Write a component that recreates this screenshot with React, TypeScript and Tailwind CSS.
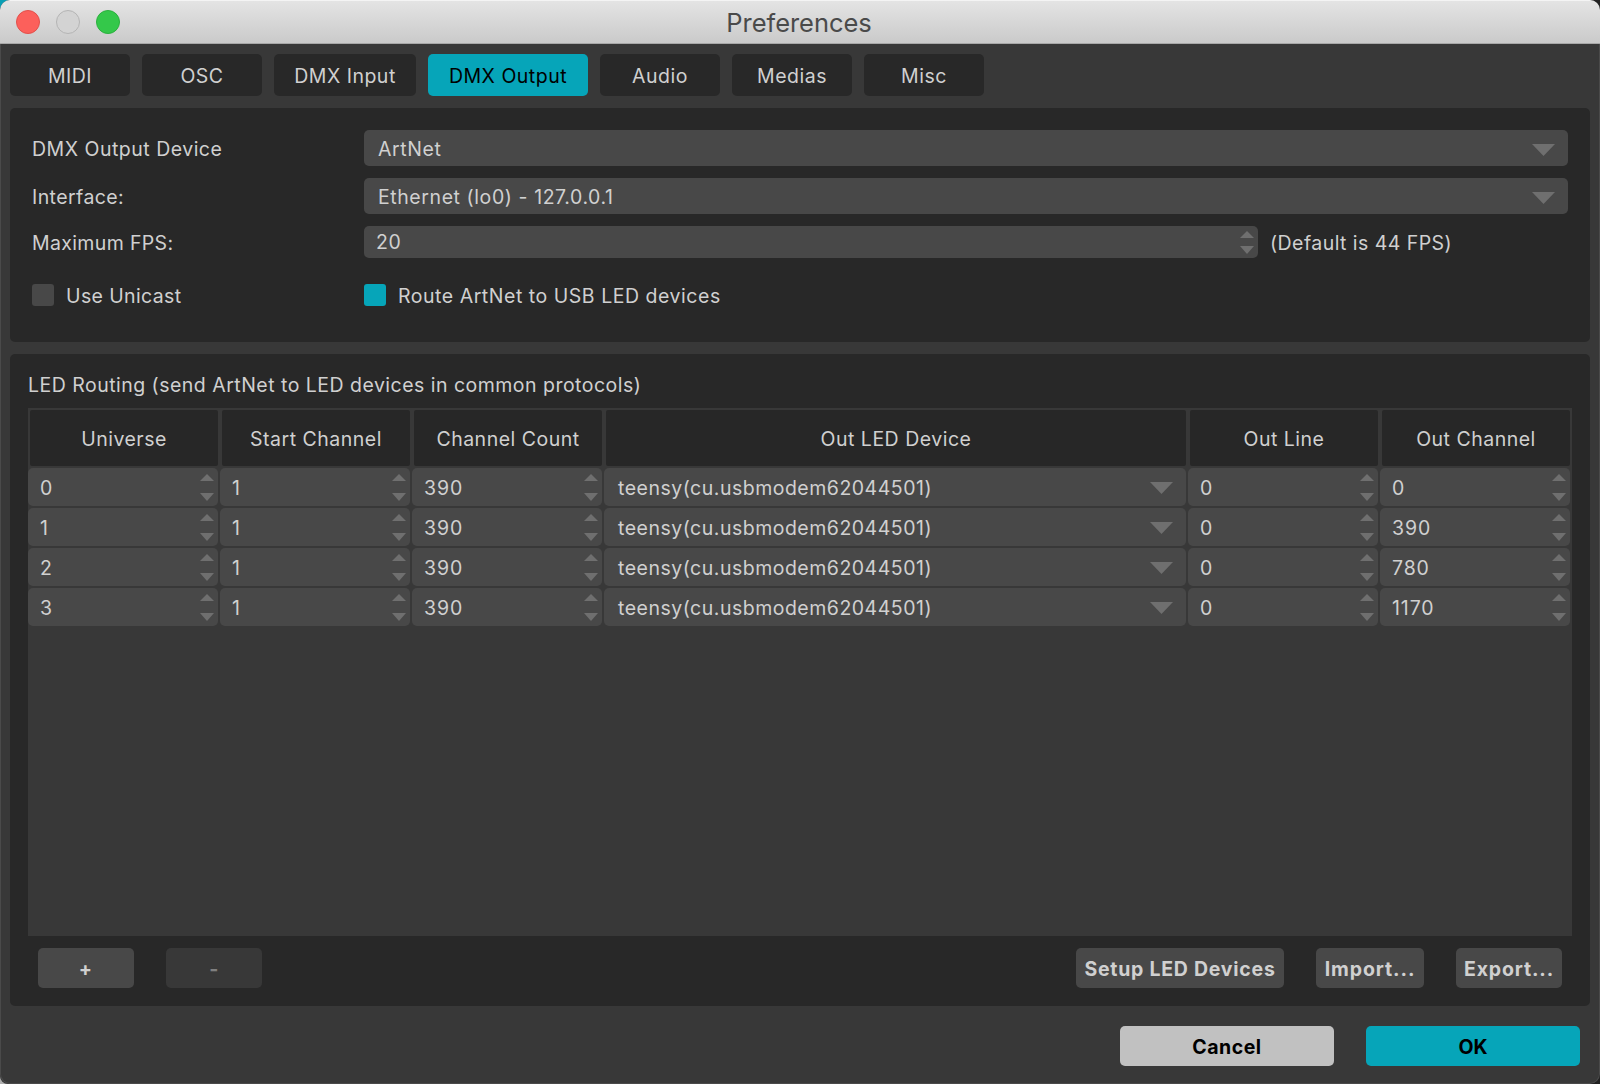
import React from 'react';
import clsx from 'clsx';

const tabs = [
  { label: 'MIDI', width: 'w-[120px]' },
  { label: 'OSC', width: 'w-[120px]' },
  { label: 'DMX Input', width: 'w-[142px]' },
  { label: 'DMX Output', width: 'w-[160px]' },
  { label: 'Audio', width: 'w-[120px]' },
  { label: 'Medias', width: 'w-[120px]' },
  { label: 'Misc', width: 'w-[120px]' },
];

const columns = ['Universe', 'Start Channel', 'Channel Count', 'Out LED Device', 'Out Line', 'Out Channel'];

const routes = [
  { universe: 0, start: 1, count: 390, device: 'teensy(cu.usbmodem62044501)', line: 0, channel: 0 },
  { universe: 1, start: 1, count: 390, device: 'teensy(cu.usbmodem62044501)', line: 0, channel: 390 },
  { universe: 2, start: 1, count: 390, device: 'teensy(cu.usbmodem62044501)', line: 0, channel: 780 },
  { universe: 3, start: 1, count: 390, device: 'teensy(cu.usbmodem62044501)', line: 0, channel: 1170 },
];

const gridCols = 'grid grid-cols-[192px_192px_192px_584px_192px_192px]';

const ComboArrow: React.FC = () => (
  <svg className="w-[23px] h-3 shrink-0" viewBox="0 0 23 12" fill="#6f6f6f">
    <path d="M0 0h23L11.5 12z" />
  </svg>
);

const SpinArrows: React.FC<{ tall?: boolean }> = ({ tall }) => (
  <div className={clsx('flex flex-col shrink-0', tall ? 'gap-3' : 'gap-2')}>
    <svg className="w-3.5 h-[7px]" viewBox="0 0 14 7" fill="#6f6f6f">
      <path d="M7 0l7 7H0z" />
    </svg>
    <svg className="w-3.5 h-2" viewBox="0 0 14 8" fill="#6f6f6f">
      <path d="M0 0h14L7 8z" />
    </svg>
  </div>
);

const Combo: React.FC<{ value: string }> = ({ value }) => (
  <div className="h-9 w-[1204px] rounded-[5px] bg-[#484848] flex items-center justify-between pl-3.5 pr-[13px]">
    <span className="pt-0.5 tracking-[0.58px]">{value}</span>
    <div className="pt-1">
      <ComboArrow />
    </div>
  </div>
);

const SpinCell: React.FC<{ value: number }> = ({ value }) => (
  <div className="h-[38px] mr-0.5 rounded-[5px] bg-[#484848] flex items-center justify-between pl-3 pr-1">
    <span className="pt-0.5 tracking-[0.9px]">{value}</span>
    <SpinArrows tall />
  </div>
);

const Checkbox: React.FC<{ label: string; checked?: boolean }> = ({ label, checked }) => (
  <label className="flex items-center gap-3">
    <span className={clsx('size-[22px] rounded-[3px]', checked ? 'bg-[#06a5b9]' : 'bg-[#484848]')}></span>
    <span className={clsx('pt-0.5', checked ? 'tracking-[0.53px]' : 'tracking-[0.38px]')}>{label}</span>
  </label>
);

const buttonBase = 'h-10 rounded-[5px] flex items-center justify-center pt-0.5 font-bold';

const App: React.FC = () => {
  return (
    <div className="relative w-[1600px] h-[1084px] overflow-hidden bg-[#222222] font-['Inter',sans-serif] text-[19.5px] leading-6 tracking-[0.5px] whitespace-nowrap text-[#d0d0d0]">
      {/* Desktop showing behind the window corners */}
      <div className="absolute left-0 top-0 size-4 bg-[#0a9fb5]"></div>
      <div className="absolute left-0 bottom-0 size-4 bg-[#b0b0b0]"></div>

      <div className="relative w-full h-full rounded-[10px] rounded-bl-[8px] overflow-hidden bg-[#383838]">
        {/* Title bar */}
        <div className="relative h-11 flex items-center justify-center bg-linear-to-b from-[#e4e4e4] to-[#cacaca] border-t border-t-[#f4f4f4] border-b border-b-[#a8a8a8]">
          <div className="absolute left-4 top-[9px] flex gap-4">
            <span className="size-6 rounded-full bg-[#fc605b] border border-[#e2504b]"></span>
            <span className="size-6 rounded-full bg-[#d3d3d3] border border-[#b4b4b4]"></span>
            <span className="size-6 rounded-full bg-[#34c84a] border border-[#2bb03e]"></span>
          </div>
          <h1 className="text-[25.5px] leading-8 tracking-[-0.05px] pt-0.5 pr-0.5 text-[#4a4a4a]">Preferences</h1>
        </div>

        <div className="h-[1040px] px-[9px] pt-[10px] border-x border-b border-[#4a4a4a] rounded-b-[10px]">
          {/* Tabs */}
          <div className="flex gap-3">
            {tabs.map((tab) => (
              <button
                key={tab.label}
                className={clsx(
                  'h-[42px] rounded-[5px] pt-0.5',
                  tab.width,
                  tab.label === 'DMX Output' ? 'bg-[#06a5b9] text-black' : 'bg-[#282828]'
                )}
              >
                {tab.label}
              </button>
            ))}
          </div>

          {/* Device settings */}
          <div className="mt-3 h-[234px] rounded-[5px] bg-[#282828] pt-[22px] px-[22px]">
            <div className="flex h-9 items-center">
              <span className="w-[332px] pt-0.5">DMX Output Device</span>
              <Combo value="ArtNet" />
            </div>
            <div className="mt-3 flex h-9 items-center">
              <span className="w-[332px] pt-0.5 tracking-[0.42px]">Interface:</span>
              <Combo value="Ethernet (lo0) - 127.0.0.1" />
            </div>
            <div className="mt-3 flex h-8 items-center">
              <span className="w-[332px] pt-0.5 tracking-[0.35px]">Maximum FPS:</span>
              <div className="h-8 w-[894px] rounded-[5px] bg-[#484848] flex items-center justify-between pl-3 pr-1">
                <span>20</span>
                <SpinArrows />
              </div>
              <span className="pl-3 pt-0.5 tracking-[0.45px]">(Default is 44 FPS)</span>
            </div>
            <div className="mt-[25px] flex h-6 items-center">
              <div className="w-[332px]">
                <Checkbox label="Use Unicast" />
              </div>
              <Checkbox label="Route ArtNet to USB LED devices" checked />
            </div>
          </div>

          {/* LED routing */}
          <div className="mt-3 h-[652px] rounded-[5px] bg-[#282828] pt-[19px] px-[18px]">
            <div className="h-[35px] tracking-[0.48px]">LED Routing (send ArtNet to LED devices in common protocols)</div>

            <div className="h-[528px] w-[1544px] bg-[#383838]">
              <div className={clsx(gridCols, 'h-[60px] pt-0.5')}>
                {columns.map((column) => (
                  <div key={column} className="mx-0.5 h-14 rounded-[2px] bg-[#272727] flex items-center justify-center pt-0.5">
                    {column}
                  </div>
                ))}
              </div>
              <div className="flex flex-col gap-0.5">
                {routes.map((route) => (
                  <div key={route.universe} className={gridCols}>
                    <SpinCell value={route.universe} />
                    <SpinCell value={route.start} />
                    <SpinCell value={route.count} />
                    <div className="h-[38px] mr-0.5 rounded-[5px] bg-[#484848] flex items-center justify-between pl-3.5 pr-[13px]">
                      <span className="pt-0.5">{route.device}</span>
                      <div className="pt-0.5">
                        <ComboArrow />
                      </div>
                    </div>
                    <SpinCell value={route.line} />
                    <SpinCell value={route.channel} />
                  </div>
                ))}
              </div>
            </div>

            <div className="mt-3 flex px-[10px]">
              <button className={clsx(buttonBase, 'w-24 bg-[#484848] pr-px')}>+</button>
              <button className={clsx(buttonBase, 'ml-8 w-24 bg-[#383838] text-[#808080]')}>-</button>
              <div className="ml-auto flex gap-8">
                <button className={clsx(buttonBase, 'w-[208px] bg-[#484848] tracking-[0.75px]')}>Setup LED Devices</button>
                <button className={clsx(buttonBase, 'w-[108px] bg-[#484848] tracking-[0.9px]')}>Import...</button>
                <button className={clsx(buttonBase, 'w-[106px] bg-[#484848] tracking-[0.85px]')}>Export...</button>
              </div>
            </div>
          </div>

          {/* Dialog buttons */}
          <div className="mt-5 flex justify-end gap-8 pr-[10px] text-black">
            <button className={clsx(buttonBase, 'w-[214px] bg-[#c1c1c1]')}>Cancel</button>
            <button className={clsx(buttonBase, 'w-[214px] bg-[#06a5b9] tracking-normal')}>OK</button>
          </div>
        </div>
      </div>
    </div>
  );
};

export default App;
